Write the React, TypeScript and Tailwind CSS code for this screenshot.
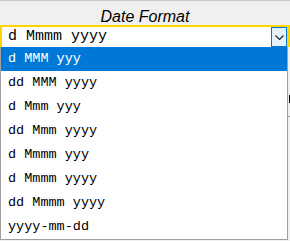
const formats = [
  "d MMM yyy",
  "dd MMM yyyy",
  "d Mmm yyy",
  "dd Mmm yyyy",
  "d Mmmm yyy",
  "d Mmmm yyyy",
  "dd Mmmm yyyy",
  "yyyy-mm-dd",
];

const mono = { fontFamily: '"Liberation Mono", "Courier New", monospace' };

export default function App() {
  const selected = 0;

  return (
    <div className="relative h-[241px] w-[290px] overflow-hidden border-t border-[#c8c8c8] bg-[#f0f0f0]">
      <div className="h-[24px] pt-[8px] text-center text-[16px] leading-[16px] italic text-black [font-family:'Liberation_Sans',Arial,sans-serif]">
        Date Format
      </div>

      <div className="flex h-[22px] w-[290px] border-l-2 border-r-[3px] border-t-2 border-[#ffd400] bg-white">
        <div className="flex flex-1 items-center pl-[6px] text-[15px] text-black" style={mono}>
          <span className="whitespace-pre">d Mmmm yyyy</span>
        </div>
        <div className="flex h-[20px] w-[16px] items-center justify-center border border-[#0078d7] bg-[#e5f1fb]">
          <svg width="9" height="5" viewBox="0 0 9 5" fill="none">
            <path d="M0.5 0.5 L4.5 4.5 L8.5 0.5" stroke="#222" strokeWidth="1.1" />
          </svg>
        </div>
      </div>

      <ul className="w-[288px] border-x border-b border-[#a0a0a0] bg-white">
        {formats.map((f, i) => (
          <li
            key={f}
            className={`flex h-[24px] items-center whitespace-pre pl-[7px] text-[13.5px] ${
              i === selected ? "bg-[#0078d7] text-white" : "text-black"
            }`}
            style={mono}
          >
            {f}
          </li>
        ))}
      </ul>

      <div className="absolute left-[289px] top-[94px] h-[8px] w-px bg-black" />
      <div className="absolute left-[288px] top-[115px] h-px w-[2px] bg-[#a0a0a0]" />
    </div>
  );
}
